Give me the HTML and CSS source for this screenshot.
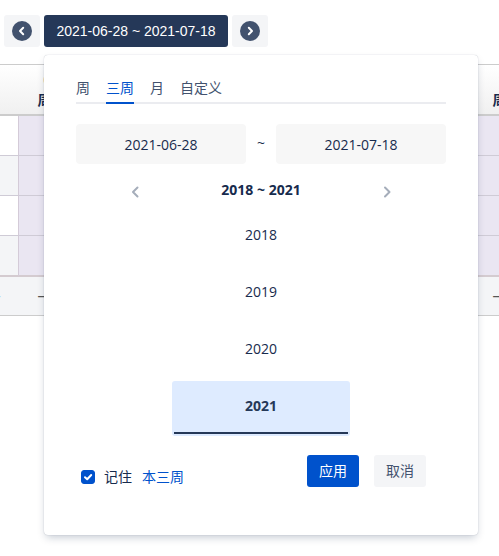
FILE: index.html
```
<!DOCTYPE html>
<html lang="zh-CN">
<head>
    <meta charset="UTF-8">
    <meta name="viewport" content="width=device-width, initial-scale=1.0">
    <title>时间表</title>
    <link rel="stylesheet" href="styles.css">
</head>
<body>
<div class="toolbar">
    <button type="button" class="btn nav-btn" aria-label="上一个">
        <svg width="20" height="20" viewBox="0 0 20 20"><circle cx="10" cy="10" r="10" fill="#42526e"/><path d="M11.2 6.8 8 10l3.2 3.2" fill="none" stroke="#fff" stroke-width="2" stroke-linecap="round" stroke-linejoin="round"/></svg>
    </button>
    <div class="picker">
        <button type="button" class="btn range-btn">2021-06-28 ~ 2021-07-18</button>

        <div class="popup">
            <div class="tabs">
                <button type="button" class="tab">周</button>
                <button type="button" class="tab active">三周</button>
                <button type="button" class="tab">月</button>
                <button type="button" class="tab">自定义</button>
            </div>

            <div class="dates">
                <input type="text" class="date" value="2021-06-28" aria-label="开始日期">
                <span class="tilde">~</span>
                <input type="text" class="date" value="2021-07-18" aria-label="结束日期">
            </div>

            <div class="year-nav">
                <button type="button" class="arrow" aria-label="前四年">
                    <svg width="12" height="12" viewBox="0 0 12 12"><path d="M8.5 1.5 4 6l4.5 4.5" fill="none" stroke="#a5adba" stroke-width="2" stroke-linecap="round" stroke-linejoin="round"/></svg>
                </button>
                <span class="year-range">2018 ~ 2021</span>
                <button type="button" class="arrow" aria-label="后四年">
                    <svg width="12" height="12" viewBox="0 0 12 12"><path d="M4 1.5 8.5 6 4 10.5" fill="none" stroke="#a5adba" stroke-width="2" stroke-linecap="round" stroke-linejoin="round"/></svg>
                </button>
            </div>

            <div class="years">
                <button type="button" class="year">2018</button>
                <button type="button" class="year">2019</button>
                <button type="button" class="year">2020</button>
                <button type="button" class="year selected">2021</button>
            </div>

            <div class="footer">
                <div class="remember">
                    <input type="checkbox" id="remember" class="check" checked>
                    <label for="remember">记住</label>
                    <a href="#" class="link">本三周</a>
                </div>
                <div class="actions">
                    <button type="button" class="btn primary">应用</button>
                    <button type="button" class="btn">取消</button>
                </div>
            </div>
        </div>
    </div>
    <button type="button" class="btn nav-btn" aria-label="下一个">
        <svg width="20" height="20" viewBox="0 0 20 20"><circle cx="10" cy="10" r="10" fill="#42526e"/><path d="M8.8 6.8 12 10l-3.2 3.2" fill="none" stroke="#fff" stroke-width="2" stroke-linecap="round" stroke-linejoin="round"/></svg>
    </button>
</div>

<div class="sheet-wrap">
    <table class="sheet">
        <thead>
            <tr>
                <th></th><th>03<br>周六</th><th></th><th></th><th></th><th></th><th></th><th></th><th>10<br>周六</th>
            </tr>
        </thead>
        <tbody>
            <tr><td></td><td class="off"></td><td class="off"></td><td></td><td></td><td></td><td></td><td></td><td class="off"></td></tr>
            <tr><td></td><td class="off"></td><td class="off"></td><td></td><td></td><td></td><td></td><td></td><td class="off"></td></tr>
            <tr><td></td><td class="off"></td><td class="off"></td><td></td><td></td><td></td><td></td><td></td><td class="off"></td></tr>
            <tr><td></td><td class="off"></td><td class="off"></td><td></td><td></td><td></td><td></td><td></td><td class="off"></td></tr>
        </tbody>
        <tfoot>
            <tr><td>——</td><td>——</td><td></td><td></td><td></td><td></td><td></td><td></td><td>——</td></tr>
        </tfoot>
    </table>
</div>
</body>
</html>
```

FILE: styles.css
```
* {
    box-sizing: border-box;
}
body {
    margin: 0;
    background: #fff;
    color: #172b4d;
    font-family: "Open Sans", "Noto Sans CJK SC", sans-serif;
    font-size: 14px;
    line-height: 20px;
}
button, input {
    font: inherit;
    color: inherit;
    border: 0;
    padding: 0;
    margin: 0;
    background: none;
}
button {
    cursor: pointer;
}
svg {
    display: block;
}

/* toolbar */
.toolbar {
    display: flex;
    gap: 4px;
    padding: 15px 4px 0;
}
.btn {
    height: 32px;
    padding: 0 12px;
    border-radius: 3px;
    background: #f4f5f7;
    color: #42526e;
}
.nav-btn {
    padding: 0 8px;
}
.range-btn {
    min-width: 184px;
    background: #253858;
    color: #fff;
    font-family: "Liberation Sans", Arial, sans-serif;
}

/* date popup */
.popup {
    position: absolute;
    z-index: 2;
    top: 55px;
    left: 44px;
    right: 21px;
    max-width: 480px;
    padding: 20px 32px 48px;
    border-radius: 4px;
    background: #fff;
    box-shadow: 0 4px 8px -2px rgba(9, 30, 66, 0.25), 0 0 1px rgba(9, 30, 66, 0.31);
}
.tabs {
    display: flex;
    gap: 16px;
    border-bottom: 2px solid #ebecf0;
}
.tab {
    height: 29px;
    margin-bottom: -2px;
    padding-bottom: 1px;
    color: #42526e;
    border-bottom: 2px solid transparent;
}
.tab.active {
    color: #0052cc;
    border-color: #0052cc;
}
.dates {
    display: flex;
    margin-top: 20px;
}
.date {
    flex: 1;
    min-width: 0;
    height: 40px;
    border-radius: 4px;
    background: #f7f7f7;
    text-align: center;
}
.tilde {
    width: 30px;
    line-height: 38px;
    text-align: center;
}
.year-nav {
    display: flex;
    align-items: center;
    justify-content: space-between;
    margin-top: 16px;
    padding: 0 53px;
}
.arrow {
    padding-top: 3px;
}
.year-range {
    font-weight: bold;
}
.years {
    display: flex;
    flex-direction: column;
    gap: 2px;
    margin: 10px 96px 0;
}
.year {
    height: 55px;
    padding-bottom: 5px;
    border-radius: 3px;
}
.year.selected {
    padding: 0 2px 5px;
    background: #deebff;
    color: #253858;
    font-weight: bold;
}
.year.selected::after {
    content: "";
    display: block;
    height: 2px;
    margin-top: 16px;
    margin-bottom: -18px;
    background: #253858;
}
.footer {
    display: flex;
    align-items: flex-start;
    justify-content: space-between;
    margin-top: 19px;
    padding: 0 20px 0 5px;
}
.remember {
    display: flex;
    align-items: center;
    padding-top: 12px;
}
.check {
    appearance: none;
    width: 14px;
    height: 14px;
    margin-right: 9px;
    border: 1px solid #dfe1e6;
    border-radius: 3px;
}
.check:checked {
    border-color: #0052cc;
    background: #0052cc url("data:image/svg+xml,%3Csvg xmlns='http://www.w3.org/2000/svg' viewBox='0 0 12 12'%3E%3Cpath d='M3 6.2 5.2 8.3 9.2 4' fill='none' stroke='white' stroke-width='2' stroke-linecap='round' stroke-linejoin='round'/%3E%3C/svg%3E") center / 12px 12px no-repeat;
}
.link {
    margin-left: 10px;
    color: #0052cc;
    text-decoration: none;
}
.actions {
    display: flex;
    gap: 15px;
}
.primary {
    background: #0052cc;
    color: #fff;
}

/* timesheet */
.sheet-wrap {
    margin-top: 17px;
    overflow: hidden;
}
.sheet {
    width: 585px;
    margin-left: -46px;
    table-layout: fixed;
    border-collapse: separate;
    border-spacing: 0;
    border-top: 1px solid #ccc;
}
.sheet th {
    height: 51px;
    padding: 0;
    border-bottom: 2px solid #ccc;
    background: linear-gradient(#fff, #f0f0f0);
}
.sheet tbody td {
    height: 40px;
    padding: 0;
    border-right: 1px solid #d4cbd8;
    border-bottom: 1px solid #cfcbd6;
}
.sheet tbody tr:nth-child(even) td {
    background: #f4f5f7;
}
.sheet tbody td.off,
.sheet tbody tr:nth-child(even) td.off {
    background: #eae6f2;
}
.sheet tbody tr:last-child td {
    height: 41px;
    border-bottom: 2px solid #d4cbd0;
}
.sheet tfoot td {
    height: 39px;
    padding: 0;
    border-bottom: 1px solid #ccc;
    background: #f4f5f7;
    color: #555;
    text-align: center;
}
```
